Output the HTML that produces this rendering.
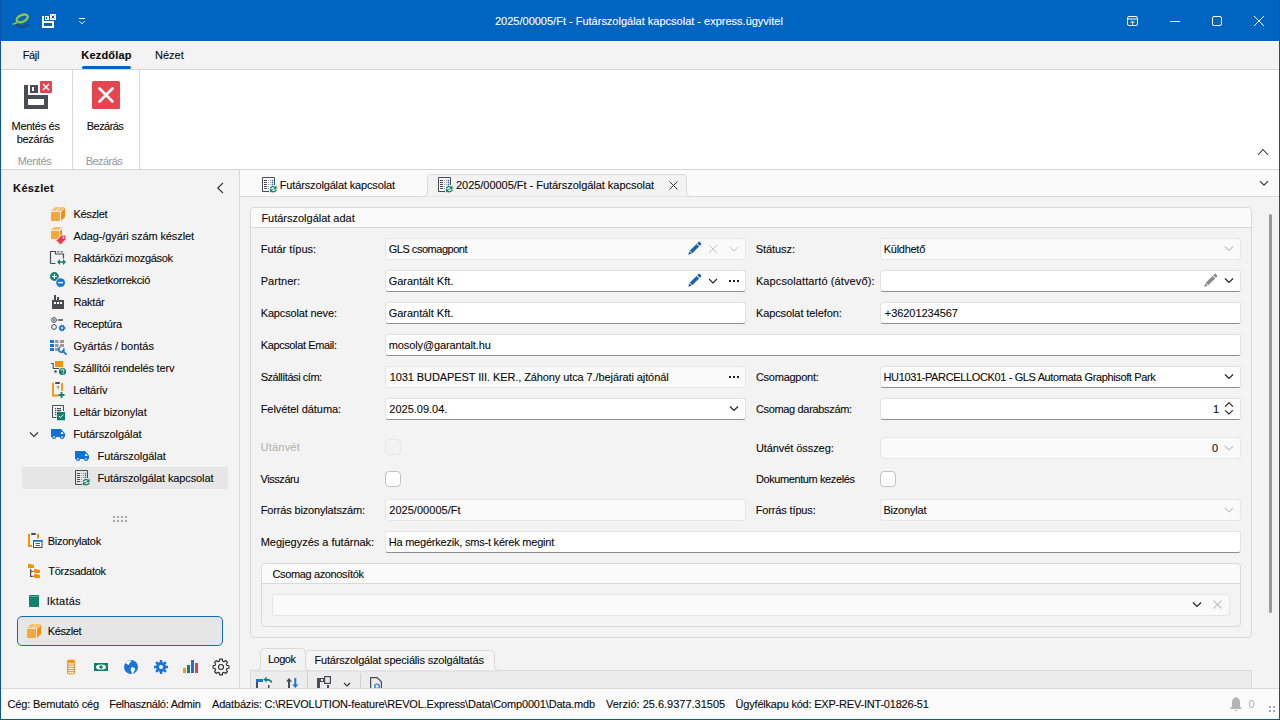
<!DOCTYPE html>
<html><head><meta charset="utf-8">
<style>
*{box-sizing:border-box;margin:0;padding:0}
html,body{width:1280px;height:720px;overflow:hidden;background:#f3f3f3}
body{position:relative;font-family:"Liberation Sans",sans-serif;font-size:11px;line-height:13px;color:#0a0a0a;letter-spacing:-0.15px;-webkit-text-stroke:0.1px currentColor}
.a{position:absolute}
.t{position:absolute;white-space:nowrap;line-height:13px;font-size:11px}
.b{font-weight:bold}
svg{position:absolute;overflow:visible}
/* title */
#title{left:0;top:0;width:1280px;height:41px;background:#0064c1}
#menu{left:1px;top:41px;width:1278px;height:28px;background:#f3f3f3;border-top:1px solid #fdfdfd}
#ribbon{left:1px;top:69px;width:1278px;height:101px;background:#fff;border-top:1px solid #d4d4d4;border-bottom:1px solid #d4d4d4}
#nav{left:1px;top:170px;width:238px;height:518px;background:#f3f3f3}
#navsep{left:239px;top:170px;width:1px;height:518px;background:#d9d9d9}
#content{left:240px;top:170px;width:1039px;height:518px;background:#f3f3f3}
#tabbar{left:240px;top:170px;width:1039px;height:27px;background:#fafafa;border-bottom:1px solid #d9d9d9}
#status{left:1px;top:688px;width:1278px;height:31px;background:#fbfbfb;border-top:1px solid #d9d9d9}
.bl{background:#0064c1}
.gb{border:1px solid #d9d9d9;border-radius:4px;background:#f3f3f3}
.gbh{background:#fafafa;border-bottom:1px solid #d9d9d9;border-radius:4px 4px 0 0}
.inp{position:absolute;height:22px;border:1px solid #e3e3e3;border-radius:3px;background:#fff;border-bottom-color:#8e8e8e}
.ro{background:#fafafa;border-color:#e6e6e6;border-bottom-color:#e6e6e6}
.cb{position:absolute;width:16px;height:16px;border:1px solid #c2c2c2;border-radius:4px;background:#fff}
.sel{background:#e6e6e6}
</style></head><body>

<!-- TITLE BAR -->
<div id="title" class="a"></div>
<svg width="1280" height="41" style="left:0;top:0">
 <!-- logo e -->
 <ellipse cx="22.2" cy="18.4" rx="5.9" ry="3.4" transform="rotate(-24 22.2 18.4)" stroke="#8dc63f" stroke-width="2.4" fill="none"/>
 <path d="M13.2 24l3.2-0.9" stroke="#8dc63f" stroke-width="1.6" stroke-linecap="round"/>
 <path d="M16.8 23.8C18.5 28.2 24.5 28.3 28.6 24.2" stroke="#1f4d6b" stroke-width="2.3" fill="none"/>
 <!-- save icon white -->
 <path fill="#fff" fill-rule="evenodd" d="M42 16h2v5h10v7h-12zM44 23v3h8v-3z"/>
 <path fill="#fff" fill-rule="evenodd" d="M45 16h4v4h-4zM46 17v2h1.2v-2z"/>
 <rect x="50" y="14" width="6" height="6" fill="#fff"/>
 <path d="M51.5 15.5l3 3M54.5 15.5l-3 3" stroke="#0064c1" stroke-width="1"/>
 <!-- qat dropdown -->
 <path d="M79 18.5h6" stroke="#fff" stroke-width="1"/>
 <path d="M79.5 21.2l2.6 2.6 2.6-2.6" stroke="#fff" stroke-width="1" fill="none"/>
 <!-- right buttons -->
 <rect x="1127.5" y="16.5" width="10" height="9" rx="1.5" stroke="#fff" stroke-width="1" fill="none"/>
 <path d="M1127.5 19h10" stroke="#fff" stroke-width="1"/>
 <path d="M1132.5 25.5v-4.5M1130.5 23l2-2 2 2" stroke="#fff" stroke-width="1" fill="none"/>
 <path d="M1170 21.5h10" stroke="#fff" stroke-width="1"/>
 <rect x="1212.5" y="16.5" width="9" height="9" rx="1.5" stroke="#fff" stroke-width="1" fill="none"/>
 <path d="M1254 16l10 10M1264 16l-10 10" stroke="#fff" stroke-width="1"/>
</svg>
<div class="t" style="left:495.00px;top:15px;color:#fff;font-size:11px;letter-spacing:-0.001px">2025/00005/Ft - Futárszolgálat kapcsolat - express.ügyvitel</div>

<!-- window borders -->
<div class="a" style="left:0;top:0;width:1px;height:720px;background:#0a52a6"></div>
<div class="a" style="left:1279px;top:0;width:1px;height:720px;background:#0a52a6"></div>
<div class="a" style="left:0;top:719px;width:1280px;height:1px;background:#0a52a6"></div>

<!-- MENU -->
<div id="menu" class="a"></div>
<div class="t" style="left:22.70px;top:49px;letter-spacing:-0.360px">Fájl</div>
<div class="t b" style="left:81.25px;top:49px;letter-spacing:0.204px">Kezdőlap</div>
<div class="a" style="left:82px;top:66px;width:49px;height:3px;border-radius:2px;background:#0064c1"></div>
<div class="t" style="left:155.00px;top:49px;letter-spacing:0.018px">Nézet</div>

<!-- RIBBON -->
<div id="ribbon" class="a"></div>
<div class="a" style="left:72px;top:70px;width:1px;height:99px;background:#d9d9d9"></div>
<div class="a" style="left:139px;top:70px;width:1px;height:99px;background:#d9d9d9"></div>
<svg width="1280" height="720" style="left:0;top:0">
 <!-- save & close -->
 <path fill="#474d53" fill-rule="evenodd" d="M24 85h4v10h20v14h-24zM28 99v6h16v-6z"/>
 <path fill="#474d53" fill-rule="evenodd" d="M30 85h8v8h-8zM32 87v4h2v-4z"/>
 <rect x="40" y="81" width="12" height="12" rx="1" fill="#e5434f"/>
 <path d="M43 84L49 90M49 84L43 90" stroke="#fff" stroke-width="1.5"/>
 <!-- close -->
 <rect x="92" y="81" width="28" height="28" rx="1.5" fill="#e5454f"/>
 <path d="M99.5 88.5l13 13M112.5 88.5l-13 13" stroke="#fff" stroke-width="2.6" stroke-linecap="round"/>
 <!-- collapse ^ -->
 <path d="M1258 155l5-5.5 5 5.5" stroke="#333" stroke-width="1.1" fill="none"/>
</svg>
<div class="t" style="left:11.60px;top:120px;letter-spacing:-0.306px">Mentés és</div>
<div class="t" style="left:16.70px;top:133px;letter-spacing:-0.289px">bezárás</div>
<div class="t" style="left:86.80px;top:120px;letter-spacing:-0.559px">Bezárás</div>
<div class="t" style="left:17.70px;top:155px;color:#9c9ca6;letter-spacing:-0.414px">Mentés</div>
<div class="t" style="left:85.70px;top:155px;color:#9c9ca6;letter-spacing:-0.542px">Bezárás</div>

<!-- NAV -->
<div id="nav" class="a"></div>
<div id="navsep" class="a"></div>
<div class="t b" style="left:13.10px;top:182px;color:#111;letter-spacing:0.358px">Készlet</div>
<div class="a sel" style="left:22px;top:467px;width:206px;height:22px"></div>
<div class="a" style="left:17px;top:616px;width:206px;height:30px;border:1px solid #1169c4;border-radius:5px;background:#e6e6e6"></div>
<svg width="240" height="720" style="left:0;top:0">
 <!-- collapse < -->
 <path d="M223 183l-5.3 5 5.3 5" stroke="#333" stroke-width="1.1" fill="none"/>
 <!-- box icon -->
 <g>
  <rect x="51" y="212" width="9" height="9" fill="#f9a53c"/>
  <path d="M51 211l4-4h4.5l-4 4z" fill="#fbbd6c"/>
  <path d="M56.5 211l4-4h4.5l-4 4z" fill="#fbbd6c"/>
  <path d="M61 212l4-4v9l-4 4z" fill="#f78f05"/>
 </g>
 <!-- adag -->
 <rect x="51" y="231" width="8" height="8" fill="#f9a53c"/>
 <path d="M51 230l3-3h8l-3 3z" fill="#fbbd6c"/>
 <path d="M60 231l2-2v7l-2 2z" fill="#f78f05"/>
 <path d="M56 240.5l5.5-5.5h4.5v4.5l-5.5 5.5z" fill="#e3404f" stroke="#f3f3f3" stroke-width="1"/>
 <circle cx="63.5" cy="237.5" r="0.9" fill="#fff"/>
 <!-- raktarkozi -->
 <path d="M50.5 263.5v-12h5v2.5h8v4.5M50.5 263.5h5" stroke="#474d53" stroke-width="1.2" fill="none"/>
 <rect x="57" y="251" width="2.5" height="1.5" fill="#8a8a8a"/><rect x="60.5" y="251" width="2.5" height="1.5" fill="#8a8a8a"/>
 <path d="M59 262h5" stroke="#12806b" stroke-width="1.6"/>
 <path d="M57 262l3-2.9v5.8zM66 262l-3-2.9v5.8z" fill="#12806b"/>
 <!-- korrekcio -->
 <circle cx="54.4" cy="276.5" r="4.4" fill="#12806b"/>
 <path d="M52 276.5h4.8M54.4 274.1v4.8" stroke="#fff" stroke-width="1.2"/>
 <circle cx="60.6" cy="282.6" r="5.1" fill="#f3f3f3"/>
 <circle cx="60.6" cy="282.6" r="4.4" fill="#1a73d9"/>
 <path d="M58.2 282.6h4.8" stroke="#fff" stroke-width="1.4"/>
 <!-- raktar factory -->
 <path d="M52 309v-9h2v-5h2v5h1v-3h2v3h5v9z" fill="#474d53"/>
 <rect x="54" y="302" width="2" height="2" fill="#fff"/><rect x="57" y="302" width="2" height="2" fill="#fff"/><rect x="60" y="302" width="2" height="2" fill="#fff"/>
 <!-- receptura -->
 <circle cx="54" cy="320" r="2.4" stroke="#474d53" stroke-width="1" fill="none"/>
 <circle cx="54" cy="320" r="1" fill="#12806b"/>
 <circle cx="54" cy="327" r="2.4" stroke="#474d53" stroke-width="1" fill="none"/>
 <path d="M58 320h5" stroke="#474d53" stroke-width="1.5"/>
 <circle cx="62" cy="328" r="2.6" fill="#1a73d9" stroke="#1a73d9" stroke-width="1.6" stroke-dasharray="1.2 0.9"/>
 <circle cx="62" cy="328" r="1" fill="#fff"/>
 <!-- gyartas grid -->
 <rect x="50" y="340" width="4" height="3" fill="#1a73d9"/><rect x="50" y="344" width="4" height="3" fill="#1a73d9"/><rect x="50" y="348" width="4" height="3" fill="#1a73d9"/>
 <rect x="55" y="340" width="3.5" height="3" fill="#999"/><rect x="55" y="344" width="3.5" height="3" fill="#999"/><rect x="55" y="348" width="3.5" height="3" fill="#999"/>
 <rect x="60" y="340" width="4" height="3" fill="#999"/><rect x="60" y="344" width="4" height="3" fill="#999"/>
 <path d="M60.2 347.2A2.6 2.6 0 1 0 63.6 348.4" stroke="#1a73d9" stroke-width="1.7" fill="none"/>
 <path d="M62.8 351l3.2 3.2" stroke="#1a73d9" stroke-width="1.8" stroke-linecap="round"/>
 <!-- szallitoi -->
 <path d="M51 363.5h2.2v5h6" stroke="#474d53" stroke-width="1.1" fill="none"/>
 <rect x="55" y="361" width="8" height="6" fill="#f78f05"/>
 <circle cx="55.5" cy="371.5" r="1.3" fill="#474d53"/>
 <circle cx="62.5" cy="371.5" r="3.6" fill="#12806b"/>
 <path d="M61.2 370.6a1.35 1.35 0 1 1 1.9 1.2v0.7" stroke="#fff" stroke-width="1" fill="none"/>
 <rect x="62.6" y="373.3" width="1" height="1" fill="#fff"/>
 <!-- leltariv -->
 <path d="M53 383v12.5h5.5M62 383v8" stroke="#f78f05" stroke-width="1.8" fill="none"/>
 <rect x="55" y="382" width="5" height="2" rx="1" fill="#474d53"/>
 <path d="M56.8 387.3a1 1 0 1 1 1.2 1v1" stroke="#474d53" stroke-width="0.7" fill="none"/>
 <path d="M58.5 395h6M61.5 392v6" stroke="#12806b" stroke-width="1.8"/>
 <!-- leltar bizonylat -->
 <path d="M63.5 411V405.5H52.5V417.5H56.5" stroke="#474d53" stroke-width="1" fill="none"/>
 <g fill="#474d53"><rect x="55" y="408" width="1.2" height="1.2"/><rect x="55" y="410" width="1.2" height="1.2"/><rect x="55" y="412" width="1.2" height="1.2"/><rect x="55" y="414" width="1.2" height="1.2"/><rect x="57" y="408" width="4" height="1.2"/><rect x="57" y="410" width="4" height="1.2"/></g>
 <rect x="57" y="412" width="8" height="8.3" fill="#12806b"/>
 <path d="M58.8 416l1.6 1.6 3-3" stroke="#fff" stroke-width="1" fill="none"/>
 <!-- tree chevron -->
 <path d="M30 432.5l4 4 4-4" stroke="#333" stroke-width="1.1" fill="none"/>
 <!-- truck 1 -->
 <g>
  <path d="M75 451h10l4 4.5v3.5h-14z" fill="#0e72d6"/>
  <path d="M85 454h1.2l1.6 2h-2.8z" fill="#fff"/>
  <circle cx="78" cy="459" r="2.1" fill="#0e72d6"/>
  <circle cx="86" cy="459" r="2.1" fill="#0e72d6"/>
  <rect x="77.2" y="458.2" width="1.6" height="1.4" fill="#e9eef4"/>
  <rect x="85.2" y="458.2" width="1.6" height="1.4" fill="#e9eef4"/>
 </g>
 <g transform="translate(-24,-22)">
  <path d="M75 451h10l4 4.5v3.5h-14z" fill="#0e72d6"/>
  <path d="M85 454h1.2l1.6 2h-2.8z" fill="#fff"/>
  <circle cx="78" cy="459" r="2.1" fill="#0e72d6"/>
  <circle cx="86" cy="459" r="2.1" fill="#0e72d6"/>
  <rect x="77.2" y="458.2" width="1.6" height="1.4" fill="#e9eef4"/>
  <rect x="85.2" y="458.2" width="1.6" height="1.4" fill="#e9eef4"/>
 </g>
 <!-- kapcsolat icon -->
 
 <!-- splitter dots -->
 <g fill="#a8a8a8">
  <rect x="113" y="516" width="2" height="2"/><rect x="117" y="516" width="2" height="2"/><rect x="121" y="516" width="2" height="2"/><rect x="125" y="516" width="2" height="2"/>
  <rect x="113" y="520" width="2" height="2"/><rect x="117" y="520" width="2" height="2"/><rect x="121" y="520" width="2" height="2"/><rect x="125" y="520" width="2" height="2"/>
 </g>
 <!-- bizonylatok -->
 <path d="M29 534v12h3M38 534v4.5" stroke="#f78f05" stroke-width="2" fill="none"/>
 <rect x="31" y="533" width="5" height="2" rx="1" fill="#474d53"/>
 <rect x="33.5" y="540.5" width="8.5" height="7" fill="#fff" stroke="#474d53" stroke-width="1"/>
 <rect x="33" y="540" width="9.5" height="1.8" fill="#1a73d9"/>
 <path d="M35.5 543.5h4.5M35.5 545.5h4.5" stroke="#474d53" stroke-width="0.9"/>
 <!-- torzsadatok -->
 <path d="M28 564h3l.8.8H34V568h-6z" fill="#f78f05"/>
 <path d="M34 569h3l.8.8H40V573h-6z" fill="#f78f05"/>
 <path d="M34 574h3l.8.8H40V578h-6z" fill="#f78f05"/>
 <path d="M30.6 569v7.4h2.8M30.6 571.5h2.8" stroke="#474d53" stroke-width="1.2" fill="none"/>
 <!-- iktatas -->
 <rect x="29" y="595" width="10" height="12" rx="1" fill="#12806b"/>
 <path d="M30 596.5h8" stroke="#5fb3a0" stroke-width="0.8"/>
 <!-- keszlet nav -->
 <g transform="translate(-24,417)">
  <rect x="51" y="212" width="9" height="9" fill="#f9a53c"/>
  <path d="M51 211l4-4h4.5l-4 4z" fill="#fbbd6c"/>
  <path d="M56.5 211l4-4h4.5l-4 4z" fill="#fbbd6c"/>
  <path d="M61 212l4-4v9l-4 4z" fill="#f78f05"/>
 </g>
 <!-- bottom icons -->
 <g stroke="#f7941d" stroke-width="1.1" fill="#fff">
  <ellipse cx="71" cy="672.5" rx="3.6" ry="1.4"/>
  <ellipse cx="71" cy="670.3" rx="3.6" ry="1.4"/>
  <ellipse cx="71" cy="668.1" rx="3.6" ry="1.4"/>
  <ellipse cx="71" cy="665.9" rx="3.6" ry="1.4"/>
  <ellipse cx="71" cy="663.7" rx="3.6" ry="1.4"/>
  <ellipse cx="71" cy="661.5" rx="3.6" ry="1.4" fill="#f7941d"/>
 </g>
 <rect x="94" y="663" width="14" height="8" fill="#12806b"/>
 <ellipse cx="101" cy="667" rx="5" ry="2.6" fill="#fff"/>
 <circle cx="101" cy="667" r="1.8" fill="#12806b"/>
 <circle cx="131" cy="667" r="7" fill="#1a73d9"/>
 <path d="M125.6 662.6C127.3 660.9 129.6 660.3 131.4 660.6L130.6 662.2C129.6 662.5 129.2 663.3 129.5 664.3L128 664.9C127.3 664 126.5 663.4 125.2 663.3z" fill="#fff"/>
 <path d="M131.3 667.4C132.9 667.2 134.4 667.8 135.2 668.8C135 670.3 134.2 671.3 133.6 672.3C133.2 673.3 132.6 674 132 674.3C131.6 673.1 131.8 672 131.2 671C130.7 669.9 130.7 668.6 131.3 667.4z" fill="#fff"/>
 <g transform="translate(161,667)">
  <circle r="5" fill="#1a73d9"/>
  <path d="M-1.2 -7h2.4v3h-2.4zM-1.2 4h2.4v3h-2.4zM-7 -1.2h3v2.4h-3zM4 -1.2h3v2.4h-3z" fill="#1a73d9"/>
  <path d="M-1.2 -7h2.4v3h-2.4zM-1.2 4h2.4v3h-2.4zM-7 -1.2h3v2.4h-3zM4 -1.2h3v2.4h-3z" fill="#1a73d9" transform="rotate(45)"/>
  <circle r="2" fill="#fff"/>
 </g>
 <rect x="183" y="668" width="3" height="5" fill="#f7941d"/>
 <rect x="187" y="665" width="3" height="8" fill="#12806b"/>
 <rect x="191" y="660" width="3" height="13" fill="#1a73d9"/>
 <rect x="195" y="663" width="3" height="10" fill="#e3404f"/>
 <g transform="translate(221,667)" stroke="#2b2b2b" stroke-width="1.1" fill="none" stroke-linejoin="round">
  <path d="M-1.63 -5.88 L-1.29 -7.90 L1.29 -7.90 L1.63 -5.88 L3.01 -5.31 L4.67 -6.50 L6.50 -4.67 L5.31 -3.01 L5.88 -1.63 L7.90 -1.29 L7.90 1.29 L5.88 1.63 L5.31 3.01 L6.50 4.67 L4.67 6.50 L3.01 5.31 L1.63 5.88 L1.29 7.90 L-1.29 7.90 L-1.63 5.88 L-3.01 5.31 L-4.67 6.50 L-6.50 4.67 L-5.31 3.01 L-5.88 1.63 L-7.90 1.29 L-7.90 -1.29 L-5.88 -1.63 L-5.31 -3.01 L-6.50 -4.67 L-4.67 -6.50 L-3.01 -5.31Z"/>
  <circle r="2.5"/>
 </g>
</svg>
<div class="t" style="left:73.50px;top:208px;letter-spacing:-0.336px">Készlet</div>
<div class="t" style="left:73.50px;top:230px;letter-spacing:-0.101px">Adag-/gyári szám készlet</div>
<div class="t" style="left:73.50px;top:252px;letter-spacing:-0.314px">Raktárközi mozgások</div>
<div class="t" style="left:73.50px;top:274px;letter-spacing:-0.259px">Készletkorrekció</div>
<div class="t" style="left:73.50px;top:296px;letter-spacing:-0.247px">Raktár</div>
<div class="t" style="left:73.50px;top:318px;letter-spacing:-0.254px">Receptúra</div>
<div class="t" style="left:73.50px;top:340px;letter-spacing:-0.020px">Gyártás / bontás</div>
<div class="t" style="left:73.30px;top:362px;letter-spacing:-0.185px">Szállítói rendelés terv</div>
<div class="t" style="left:73.30px;top:384px;letter-spacing:-0.253px">Leltárív</div>
<div class="t" style="left:73.30px;top:406px;letter-spacing:-0.035px">Leltár bizonylat</div>
<div class="t" style="left:73.30px;top:428px;letter-spacing:-0.064px">Futárszolgálat</div>
<div class="t" style="left:97.50px;top:450px;letter-spacing:-0.064px">Futárszolgálat</div>
<div class="t" style="left:97.50px;top:472px;letter-spacing:-0.116px">Futárszolgálat kapcsolat</div>
<div class="t" style="left:47.80px;top:535px;letter-spacing:-0.285px">Bizonylatok</div>
<div class="t" style="left:48.30px;top:565px;letter-spacing:-0.273px">Törzsadatok</div>
<div class="t" style="left:46.80px;top:595px;letter-spacing:0.233px">Iktatás</div>
<div class="t" style="left:47.80px;top:625px;letter-spacing:-0.403px">Készlet</div>

<!-- CONTENT -->
<div id="content" class="a"></div>
<div id="tabbar" class="a"></div>
<!-- active tab -->
<svg width="1280" height="720" style="left:0;top:0">
 <path d="M422.5 197V196.5Q427.5 196.5 427.5 191.5V178.5Q427.5 174.5 431.5 174.5H682.5Q686.5 174.5 686.5 178.5V191.5Q686.5 196.5 691.5 196.5V197z" fill="#f3f3f3" stroke="#d9d9d9" stroke-width="1"/>
 <rect x="422" y="197" width="270" height="2" fill="#f3f3f3"/>
</svg>
<svg width="1280" height="720" style="left:0;top:0">
 <g>
  <path d="M274.5 185V177.5H262.5V191.5H269" stroke="#474d53" stroke-width="1" fill="none"/>
  <g fill="#474d53"><rect x="264" y="180" width="3" height="1"/><rect x="264" y="182" width="3" height="1"/><rect x="264" y="184" width="3" height="1"/><rect x="264" y="186" width="3" height="1"/><rect x="264" y="188" width="3" height="1"/></g>
  <g fill="#a0a0a0"><rect x="268" y="180" width="1" height="1"/><rect x="270" y="180" width="1" height="1"/><rect x="268" y="182" width="1" height="1"/><rect x="270" y="182" width="1" height="1"/><rect x="268" y="184" width="1" height="1"/><rect x="270" y="184" width="1" height="1"/><rect x="268" y="186" width="1" height="1"/><rect x="268" y="188" width="1" height="1"/></g>
  <g fill="#1a73d9"><rect x="271.8" y="179.8" width="1.4" height="1.4"/><rect x="271.8" y="181.8" width="1.4" height="1.4"/><rect x="271.8" y="183.8" width="1.4" height="1.4"/></g>
  <path d="M270.3 188.6A3.1 3.1 0 0 1 275.2 187.3M276.2 189.8A3.1 3.1 0 0 1 271.3 191.1" stroke="#12806b" stroke-width="1.3" fill="none"/>
  <path d="M276.6 185.6v3.6h-3.6zM269.9 192.8v-3.6h3.6z" fill="#12806b"/>
 </g>
 <g transform="translate(176,0)">
  <path d="M274.5 185V177.5H262.5V191.5H269" stroke="#474d53" stroke-width="1" fill="none"/>
  <g fill="#474d53"><rect x="264" y="180" width="3" height="1"/><rect x="264" y="182" width="3" height="1"/><rect x="264" y="184" width="3" height="1"/><rect x="264" y="186" width="3" height="1"/><rect x="264" y="188" width="3" height="1"/></g>
  <g fill="#a0a0a0"><rect x="268" y="180" width="1" height="1"/><rect x="270" y="180" width="1" height="1"/><rect x="268" y="182" width="1" height="1"/><rect x="270" y="182" width="1" height="1"/><rect x="268" y="184" width="1" height="1"/><rect x="270" y="184" width="1" height="1"/><rect x="268" y="186" width="1" height="1"/><rect x="268" y="188" width="1" height="1"/></g>
  <g fill="#1a73d9"><rect x="271.8" y="179.8" width="1.4" height="1.4"/><rect x="271.8" y="181.8" width="1.4" height="1.4"/><rect x="271.8" y="183.8" width="1.4" height="1.4"/></g>
  <path d="M270.3 188.6A3.1 3.1 0 0 1 275.2 187.3M276.2 189.8A3.1 3.1 0 0 1 271.3 191.1" stroke="#12806b" stroke-width="1.3" fill="none"/>
  <path d="M276.6 185.6v3.6h-3.6zM269.9 192.8v-3.6h3.6z" fill="#12806b"/>
 </g>
 <g transform="translate(-187,293)">
  <path d="M274.5 185V177.5H262.5V191.5H269" stroke="#474d53" stroke-width="1" fill="none"/>
  <g fill="#474d53"><rect x="264" y="180" width="3" height="1"/><rect x="264" y="182" width="3" height="1"/><rect x="264" y="184" width="3" height="1"/><rect x="264" y="186" width="3" height="1"/><rect x="264" y="188" width="3" height="1"/></g>
  <g fill="#a0a0a0"><rect x="268" y="180" width="1" height="1"/><rect x="270" y="180" width="1" height="1"/><rect x="268" y="182" width="1" height="1"/><rect x="270" y="182" width="1" height="1"/><rect x="268" y="184" width="1" height="1"/><rect x="270" y="184" width="1" height="1"/><rect x="268" y="186" width="1" height="1"/><rect x="268" y="188" width="1" height="1"/></g>
  <g fill="#1a73d9"><rect x="271.8" y="179.8" width="1.4" height="1.4"/><rect x="271.8" y="181.8" width="1.4" height="1.4"/><rect x="271.8" y="183.8" width="1.4" height="1.4"/></g>
  <path d="M270.3 188.6A3.1 3.1 0 0 1 275.2 187.3M276.2 189.8A3.1 3.1 0 0 1 271.3 191.1" stroke="#12806b" stroke-width="1.3" fill="none"/>
  <path d="M276.6 185.6v3.6h-3.6zM269.9 192.8v-3.6h3.6z" fill="#12806b"/>
 </g>
 <path d="M669.5 181.5l8 8M677.5 181.5l-8 8" stroke="#333" stroke-width="1"/>
 <path d="M1260 181.2l4 4 4-4" stroke="#333" stroke-width="1.1" fill="none"/>
 <!-- scrollbar -->
 <rect x="1269" y="214" width="3" height="399" rx="1.5" fill="#999"/>
</svg>
<div class="t" style="left:279.80px;top:179px;letter-spacing:-0.150px">Futárszolgálat kapcsolat</div>
<div class="t" style="left:456.00px;top:179px;letter-spacing:-0.033px">2025/00005/Ft - Futárszolgálat kapcsolat</div>

<!-- group box -->
<div class="a gb" style="left:250px;top:207px;width:1002px;height:431px"></div>
<div class="a gbh" style="left:251px;top:208px;width:1000px;height:20px"></div>
<div class="t" style="left:261.40px;top:212px;letter-spacing:-0.011px">Futárszolgálat adat</div>

<!-- labels left -->
<div class="t" style="left:260.70px;top:243px;letter-spacing:-0.025px">Futár típus:</div>
<div class="t" style="left:260.70px;top:275px;letter-spacing:0.033px">Partner:</div>
<div class="t" style="left:260.70px;top:307px;letter-spacing:-0.144px">Kapcsolat neve:</div>
<div class="t" style="left:260.70px;top:339px;letter-spacing:-0.378px">Kapcsolat Email:</div>
<div class="t" style="left:260.70px;top:371px;letter-spacing:-0.457px">Szállítási cím:</div>
<div class="t" style="left:260.70px;top:403px;letter-spacing:-0.057px">Felvétel dátuma:</div>
<div class="t" style="left:260.60px;top:441px;color:#b4b4b4;letter-spacing:0.208px">Utánvét</div>
<div class="t" style="left:260.60px;top:473px;letter-spacing:-0.452px">Visszáru</div>
<div class="t" style="left:260.70px;top:504px;letter-spacing:-0.157px">Forrás bizonylatszám:</div>
<div class="t" style="left:260.70px;top:536px;letter-spacing:-0.013px">Megjegyzés a futárnak:</div>
<!-- labels right -->
<div class="t" style="left:755.80px;top:243px;letter-spacing:-0.084px">Státusz:</div>
<div class="t" style="left:755.90px;top:275px;letter-spacing:0.104px">Kapcsolattartó (átvevő):</div>
<div class="t" style="left:755.90px;top:307px;letter-spacing:-0.094px">Kapcsolat telefon:</div>
<div class="t" style="left:755.90px;top:371px;letter-spacing:-0.247px">Csomagpont:</div>
<div class="t" style="left:755.90px;top:403px;letter-spacing:-0.333px">Csomag darabszám:</div>
<div class="t" style="left:755.90px;top:442px;letter-spacing:-0.073px">Utánvét összeg:</div>
<div class="t" style="left:755.90px;top:473px;letter-spacing:-0.398px">Dokumentum kezelés</div>
<div class="t" style="left:755.80px;top:504px;letter-spacing:-0.149px">Forrás típus:</div>

<!-- inputs -->
<div class="inp ro" style="left:385px;top:238px;width:361px"></div>
<div class="inp ro" style="left:880px;top:238px;width:361px"></div>
<div class="inp" style="left:385px;top:270px;width:361px"></div>
<div class="inp" style="left:880px;top:270px;width:361px"></div>
<div class="inp" style="left:385px;top:302px;width:361px"></div>
<div class="inp" style="left:880px;top:302px;width:361px"></div>
<div class="inp" style="left:385px;top:334px;width:856px"></div>
<div class="inp ro" style="left:385px;top:366px;width:361px"></div>
<div class="inp" style="left:880px;top:366px;width:361px"></div>
<div class="inp" style="left:385px;top:398px;width:361px"></div>
<div class="inp" style="left:880px;top:398px;width:361px"></div>
<div class="cb" style="left:385px;top:439px;border-color:#e6e6e6;background:#f3f3f3"></div>
<div class="inp ro" style="left:880px;top:437px;width:361px;height:22px"></div>
<div class="cb" style="left:385px;top:471px"></div>
<div class="cb" style="left:880px;top:471px"></div>
<div class="inp ro" style="left:385px;top:499px;width:361px"></div>
<div class="inp ro" style="left:880px;top:499px;width:361px"></div>
<div class="inp" style="left:385px;top:531px;width:856px"></div>

<!-- input texts -->
<div class="t" style="left:388.70px;top:243px;letter-spacing:-0.472px">GLS csomagpont</div>
<div class="t" style="left:883.75px;top:243px;letter-spacing:-0.273px">Küldhető</div>
<div class="t" style="left:388.70px;top:275px;letter-spacing:-0.012px">Garantált Kft.</div>
<div class="t" style="left:388.70px;top:307px;letter-spacing:-0.012px">Garantált Kft.</div>
<div class="t" style="left:884.75px;top:307px;letter-spacing:-0.046px">+36201234567</div>
<div class="t" style="left:388.70px;top:339px;letter-spacing:-0.105px">mosoly@garantalt.hu</div>
<div class="t" style="left:389.80px;top:371px;letter-spacing:-0.096px">1031 BUDAPEST III. KER., Záhony utca 7./bejárati ajtónál</div>
<div class="t" style="left:883.50px;top:371px;letter-spacing:-0.366px">HU1031-PARCELLOCK01 - GLS Automata Graphisoft Park</div>
<div class="t" style="left:389.30px;top:403px;letter-spacing:-0.005px">2025.09.04.</div>
<div class="t" style="left:1213px;top:403px">1</div>
<div class="t" style="left:1212px;top:442px">0</div>
<div class="t" style="left:389.30px;top:504px;letter-spacing:0.026px">2025/00005/Ft</div>
<div class="t" style="left:883.40px;top:504px;letter-spacing:-0.197px">Bizonylat</div>
<div class="t" style="left:388.70px;top:536px;letter-spacing:-0.213px">Ha megérkezik, sms-t kérek megint</div>

<!-- csomag azonositok -->
<div class="a gb" style="left:261px;top:563px;width:980px;height:64px"></div>
<div class="a gbh" style="left:262px;top:564px;width:978px;height:20px"></div>
<div class="t" style="left:272.50px;top:568px;letter-spacing:-0.364px">Csomag azonosítók</div>
<div class="inp ro" style="left:272px;top:594px;width:958px;height:22px"></div>

<svg width="1280" height="720" style="left:0;top:0">
 
 <!-- row1 -->
 <g transform="translate(688.3,254.7) rotate(-45)" fill="#1f5fb0"><path d="M0 0l3-1.8v3.6z"/><rect x="3.8" y="-1.8" width="9.7" height="3.6"/><rect x="14.3" y="-1.8" width="2.8" height="3.6" rx="0.8"/></g>
 <path d="M709 245l8 8M717 245l-8 8" stroke="#c4c4c4" stroke-width="1"/>
 <path d="M730 247l4 4 4-4" stroke="#c4c4c4" stroke-width="1" fill="none"/>
 <path d="M1225 246.5l4 4 4-4" stroke="#c4c4c4" stroke-width="1.1" fill="none"/>
 <!-- row2 -->
 <g transform="translate(688.3,286.7) rotate(-45)" fill="#1f5fb0"><path d="M0 0l3-1.8v3.6z"/><rect x="3.8" y="-1.8" width="9.7" height="3.6"/><rect x="14.3" y="-1.8" width="2.8" height="3.6" rx="0.8"/></g>
 <path d="M709 279l4 4 4-4" stroke="#222" stroke-width="1.1" fill="none"/>
 <g fill="#222"><rect x="729" y="280" width="2" height="2"/><rect x="733" y="280" width="2" height="2"/><rect x="737" y="280" width="2" height="2"/></g>
 <g transform="translate(1204.3,286.7) rotate(-45)" fill="#8a8a8a"><path d="M0 0l3-1.8v3.6z"/><rect x="3.8" y="-1.8" width="9.7" height="3.6"/><rect x="14.3" y="-1.8" width="2.8" height="3.6" rx="0.8"/></g>
 <path d="M1225 278.5l4 4 4-4" stroke="#222" stroke-width="1.2" fill="none"/>
 <!-- row5 -->
 <g fill="#222"><rect x="729" y="376" width="2" height="2"/><rect x="733" y="376" width="2" height="2"/><rect x="737" y="376" width="2" height="2"/></g>
 <path d="M1225 374.5l4 4 4-4" stroke="#222" stroke-width="1.2" fill="none"/>
 <!-- row6 -->
 <path d="M730 406.5l4 4 4-4" stroke="#222" stroke-width="1.2" fill="none"/>
 <path d="M1225 406.6l4-3.8 4 3.8M1225 410.4l3.9 3.6 4-3.6" stroke="#222" stroke-width="1.1" fill="none"/>
 <!-- row7 -->
 <path d="M1225 446l4 4 4-4" stroke="#c4c4c4" stroke-width="1.1" fill="none"/>
 <!-- forras tipus -->
 <path d="M1225 508l4 4 4-4" stroke="#c4c4c4" stroke-width="1.1" fill="none"/>
 <!-- csomag azonositok -->
 <path d="M1193 602.5l4 4 4-4" stroke="#222" stroke-width="1.2" fill="none"/>
 <path d="M1213.5 600.5l8 8M1221.5 600.5l-8 8" stroke="#c4c4c4" stroke-width="1.1"/>
</svg>

<!-- lower tabs -->
<div class="a" style="left:250px;top:670px;width:1002px;height:18px;background:#ececec;border:1px solid #d9d9d9;border-bottom:none"></div>
<svg width="1280" height="720" style="left:0;top:0">
 <path d="M301.5 671V670.5Q305.5 670.5 305.5 666.5V654.5Q305.5 650.5 309.5 650.5H490.5Q494.5 650.5 494.5 654.5V666.5Q494.5 670.5 498.5 670.5V671z" fill="#f5f5f5" stroke="#d9d9d9" stroke-width="1"/>
 <path d="M256.5 671V670.5Q260.5 670.5 260.5 666.5V652.5Q260.5 648.5 264.5 648.5H301.5Q305.5 648.5 305.5 652.5V666.5Q305.5 670.5 309.5 670.5V671z" fill="#f3f3f3" stroke="#d9d9d9" stroke-width="1"/>
</svg>
<div class="t" style="left:268.00px;top:653px;letter-spacing:-0.518px">Logok</div>
<div class="t" style="left:314.40px;top:654px;letter-spacing:-0.166px">Futárszolgálat speciális szolgáltatás</div>
<svg width="1280" height="720" style="left:0;top:0">
 <path d="M307.5 673v15M360.5 673v15" stroke="#d0d0d0" stroke-width="1"/>
 <rect x="256" y="679" width="7" height="3" fill="#1a73d9"/>
 <rect x="256" y="682" width="2" height="6" fill="#474d53"/>
 <rect x="268" y="685" width="1.5" height="3" fill="#474d53"/>
 <path d="M271.6 682.6C271.2 680.6 269.6 679.6 266 679.6" stroke="#12806b" stroke-width="1.7" fill="none"/>
 <path d="M263.4 679.6l3.2-2.8v5.6z" fill="#12806b"/>
 <rect x="288" y="680.5" width="2" height="7.5" fill="#474d53"/>
 <path d="M286 681.5l3-3.5 3 3.5z" fill="#474d53"/>
 <rect x="294.3" y="678" width="2" height="7" fill="#1a73d9"/>
 <path d="M292.3 684.5l3 3.5 3-3.5z" fill="#1a73d9"/>
 <rect x="317" y="678" width="3" height="10" fill="#474d53"/>
 <rect x="320.5" y="678.5" width="3" height="3" fill="none" stroke="#474d53" stroke-width="1"/>
 <rect x="324.6" y="676.6" width="5.8" height="6.8" fill="none" stroke="#474d53" stroke-width="1.2"/>
 <rect x="327" y="685" width="2" height="3" fill="#474d53"/>
 <path d="M344 683l3 3 3-3" stroke="#333" stroke-width="1.1" fill="none"/>
 <path d="M370.6 688v-10.4h6.6l4.2 4.2v6.2" stroke="#474d53" stroke-width="1.2" fill="none"/>
 <circle cx="377" cy="686.3" r="2.3" stroke="#1a73d9" stroke-width="1.2" fill="none"/>
</svg>

<!-- STATUS -->
<div id="status" class="a"></div>
<div class="t" style="left:7.50px;top:698px;letter-spacing:-0.159px">Cég: Bemutató cég</div>
<div class="t" style="left:109.25px;top:698px;letter-spacing:-0.264px">Felhasználó: Admin</div>
<div class="t" style="left:212.00px;top:698px;letter-spacing:-0.174px">Adatbázis: C:\REVOLUTION-feature\REVOL.Express\Data\Comp0001\Data.mdb</div>
<div class="t" style="left:606.00px;top:698px;letter-spacing:-0.007px">Verzió: 25.6.9377.31505</div>
<div class="t" style="left:735.60px;top:698px;letter-spacing:-0.207px">Ügyfélkapu kód: EXP-REV-INT-01826-51</div>
<div class="t" style="left:1248.5px;top:698px;color:#b0b0b0;-webkit-text-stroke:0">0</div>
<svg width="1280" height="720" style="left:0;top:0">
 <path d="M1229.8 709H1242C1240.6 707.8 1240 706.5 1240 704.5V702C1240 699.5 1238.3 697.5 1236 697C1233.7 697.5 1232 699.5 1232 702V704.5C1232 706.5 1231.3 707.8 1229.8 709Z" fill="#b4b4b4"/>
 <rect x="1235" y="710" width="2" height="1" fill="#b4b4b4"/>
 <g fill="#a8a8a8"><rect x="1269" y="706" width="2" height="2"/><rect x="1273" y="706" width="2" height="2"/><rect x="1269" y="710" width="2" height="2"/><rect x="1273" y="710" width="2" height="2"/></g>
</svg>

</body></html>
